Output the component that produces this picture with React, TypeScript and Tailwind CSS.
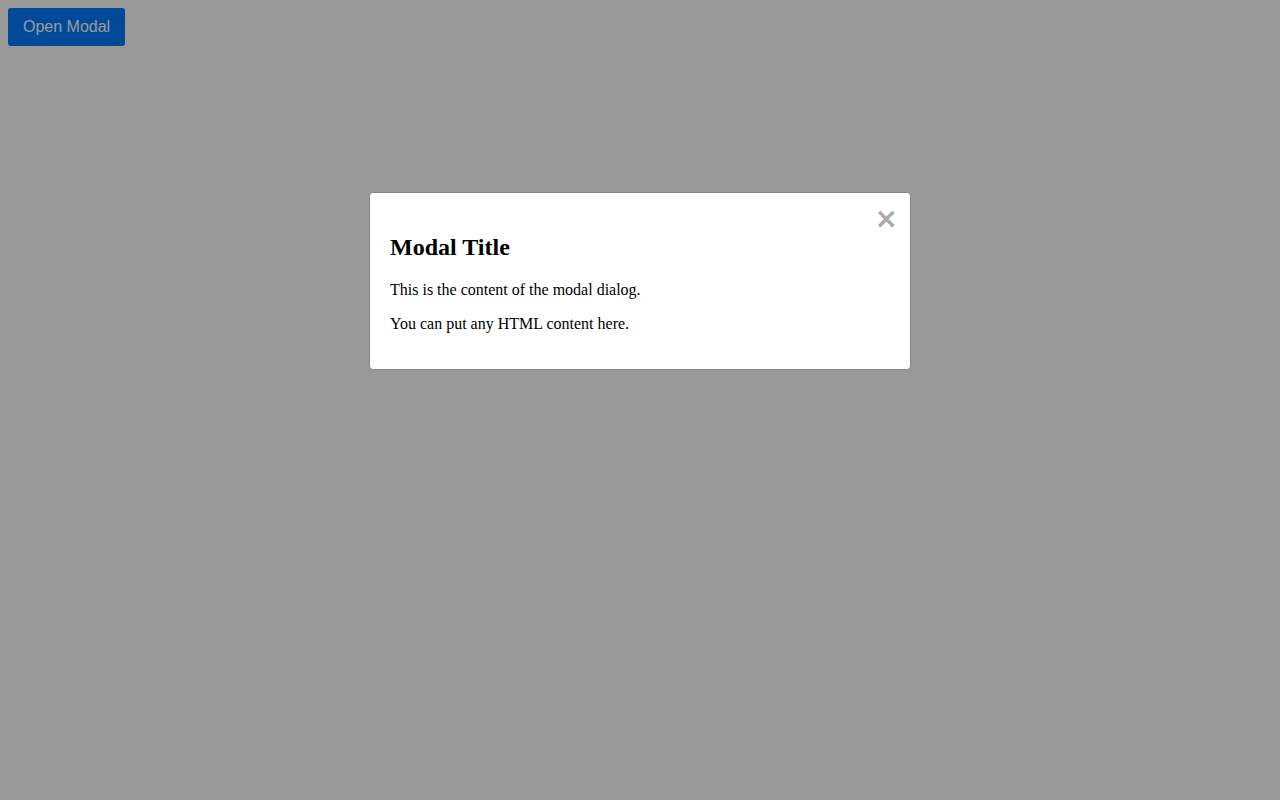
export default function App() {
  return (
    <div className="min-h-[800px] bg-white p-2" style={{ fontFamily: '"Liberation Serif", serif' }}>
      <button className="rounded-[3px] bg-[#007bff] px-[15px] py-[10px] text-base text-white font-['Liberation_Sans',Arial,sans-serif] leading-[18px]">
        Open Modal
      </button>

      {/* overlay */}
      <div className="fixed inset-0 bg-black/40">
        <div className="relative mx-auto mt-[192px] w-[542px] rounded border border-[#888] bg-white p-5 text-black">
          <span className="absolute right-[12px] top-[10px] cursor-pointer font-['DejaVu_Sans',sans-serif] text-[28px] font-bold leading-[32px] text-[#aaa]">
            ×
          </span>
          <h2 className="mt-[21px] mb-5 text-2xl font-bold leading-[27px]">Modal Title</h2>
          <p className="mb-4 text-base leading-[18px]">This is the content of the modal dialog.</p>
          <p className="mb-4 text-base leading-[18px]">You can put any HTML content here.</p>
        </div>
      </div>
    </div>
  );
}
